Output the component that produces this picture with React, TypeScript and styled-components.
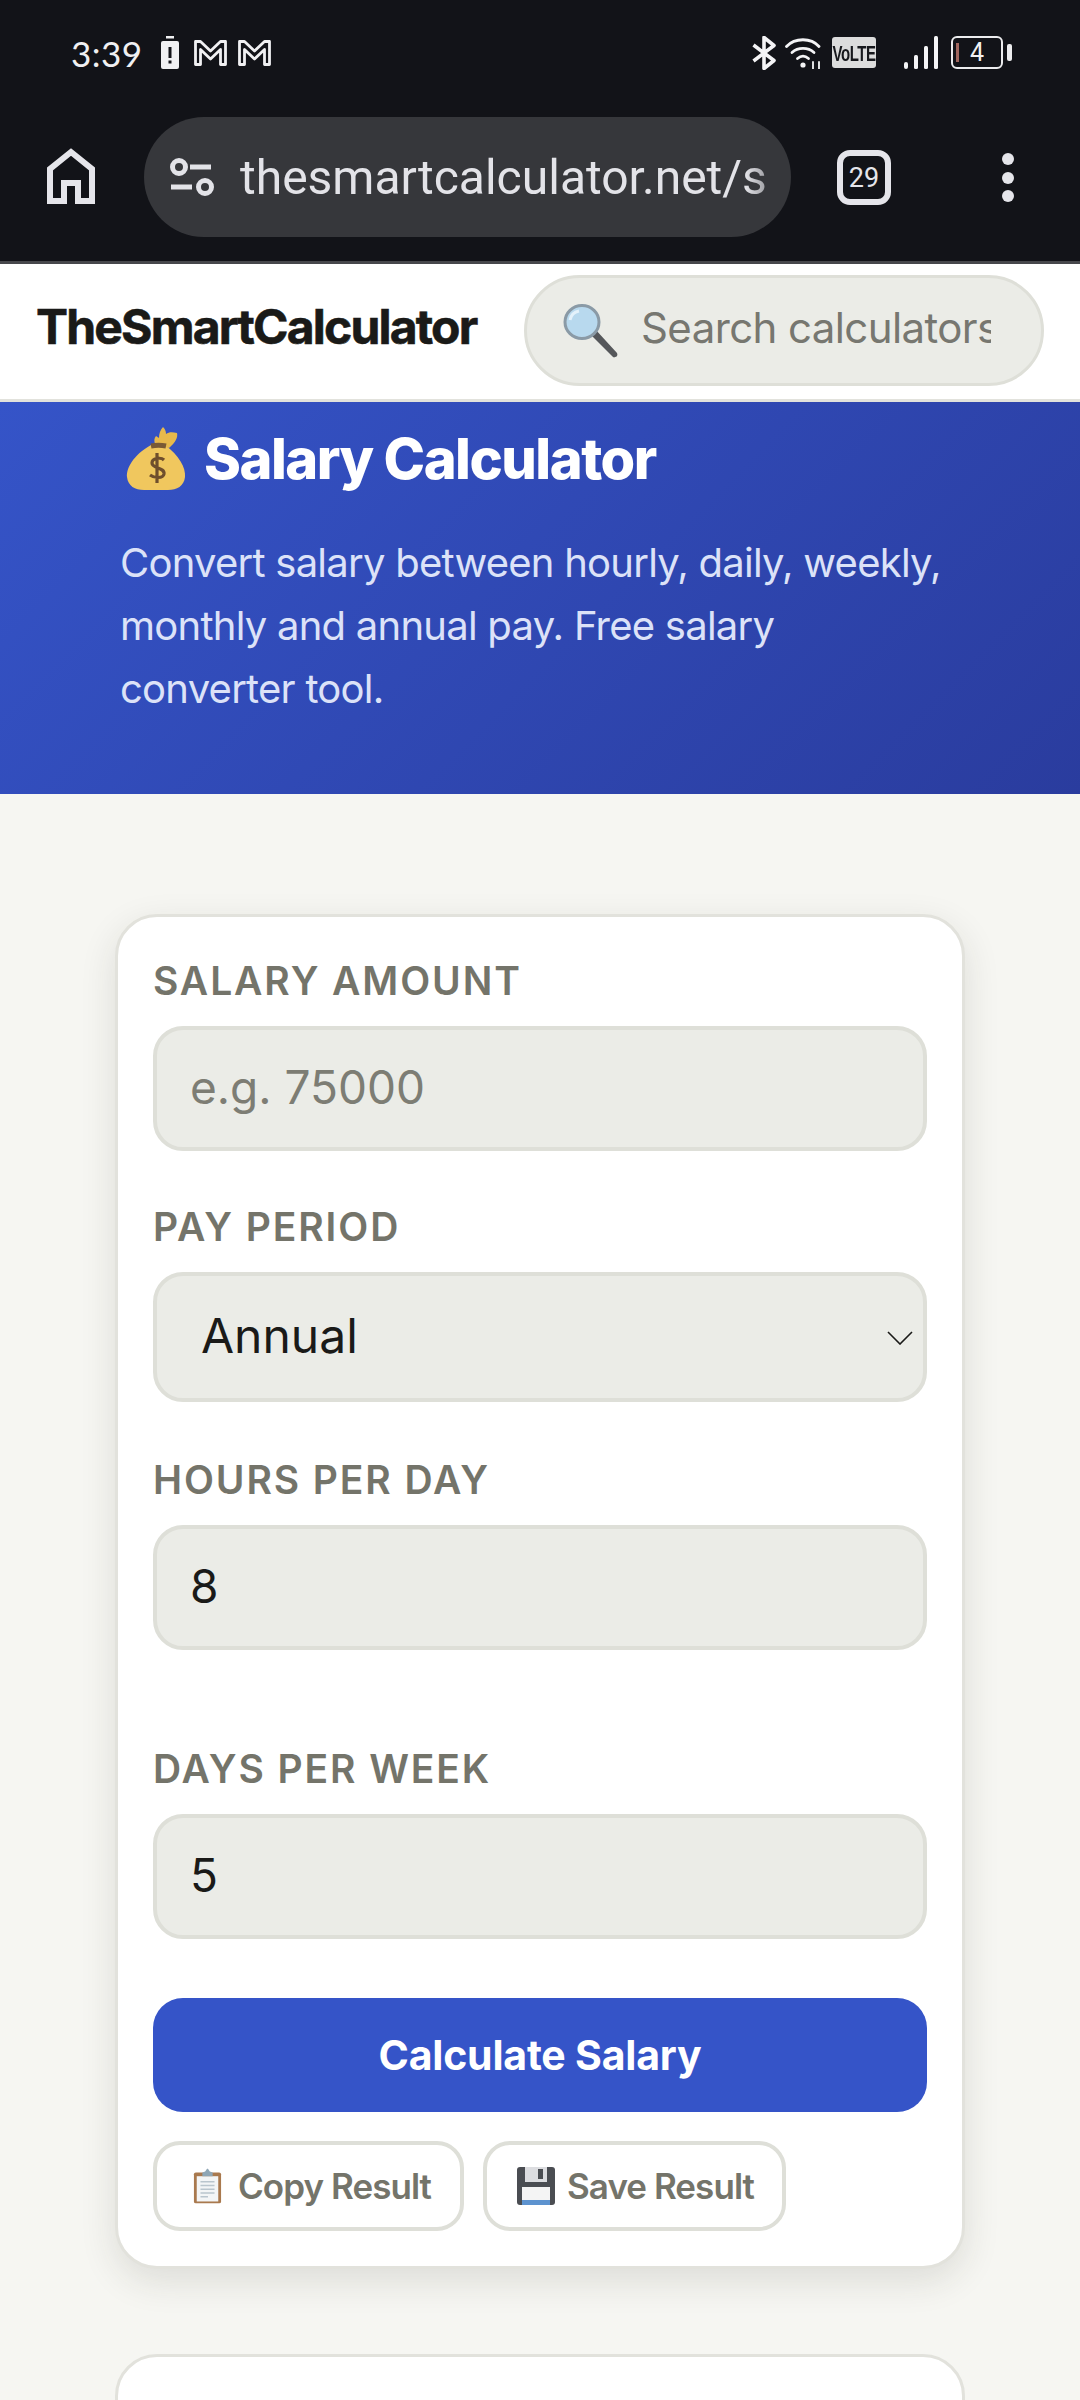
import React from "react";
import styled, { createGlobalStyle } from "styled-components";

const Global = createGlobalStyle`
  html, body { margin: 0; padding: 0; background: #f6f6f2; }
  body { width: 1080px; height: 2400px; overflow: hidden; font-family: Inter, "Liberation Sans", sans-serif; }
  * { box-sizing: border-box; }
`;

const Chrome = styled.div`
  height: 264px; background: #121318; border-bottom: 3px solid #47484c;
  display: flex; flex-direction: column; color: #e5e5ea;
`;
const StatusBar = styled.div`
  height: 105px; padding: 0 77px 0 71px; display: flex; align-items: center; justify-content: space-between;
`;
const StatusGroup = styled.div`
  display: flex; align-items: center; gap: ${(p: { $gap: number }) => p.$gap}px;
`;
const Time = styled.span`
  font-family: Lato, sans-serif; font-size: 35px; letter-spacing: 0.5px; margin-right: 7px; color: #f0f0f2;
`;
const AlertBattery = styled.svg`
  margin-right: 4px;
`;
const VoLTE = styled.span`
  width: 44px; height: 31px; border-radius: 3px; background: #dcdcdc; color: #17181c;
  font-family: "Liberation Sans", sans-serif; font-weight: 700; font-size: 15px; letter-spacing: -0.5px;
  display: flex; align-items: center; justify-content: center;
`;
const VoLTEText = styled.span`
  display: inline-block; transform: scaleY(1.5);
`;
const SignalBars = styled.svg`
  margin-left: 19px;
`;
const Battery = styled.div`
  width: 52px; height: 33px; border: 2.5px solid #ececee; border-radius: 6px;
  display: flex; align-items: center; justify-content: center; position: relative;
  font-family: Roboto, sans-serif; font-size: 25px; color: #f0f0f2;
  margin-left: 4px;
  &::before { content: ""; position: absolute; left: 3px; top: 5px; bottom: 5px; width: 2.5px; background: #a0665e; }
  &::after { content: ""; position: absolute; right: -11px; top: 6px; bottom: 6px; width: 5px; border-radius: 2px; background: #ececee; }
`;
const Toolbar = styled.div`
  flex: 1; display: flex; align-items: flex-start; padding: 12px 0 0 47px;
`;
const HomeButton = styled.div`
  width: 50px; height: 56px; margin-top: 31px; flex: none;
`;
const UrlPill = styled.div`
  width: 647px; height: 120px; margin-left: 47px; border-radius: 60px; background: #36373b;
  display: flex; align-items: center; padding-left: 26px; flex: none;
`;
const UrlText = styled.span`
  margin-left: 26px; width: 532px; overflow: hidden; white-space: nowrap;
  font-family: Roboto, sans-serif; font-size: 48px; letter-spacing: 0; color: #e3e3e8;
  -webkit-mask-image: linear-gradient(90deg, #000 95%, rgba(0, 0, 0, 0.5) 100%);
`;
const TabCount = styled.div`
  width: 54px; height: 55px; margin: 33px 0 0 46px; border: 6px solid #e5e5ea; border-radius: 13px; flex: none;
  display: flex; align-items: center; justify-content: center;
  font-family: Roboto, sans-serif; font-size: 27px; color: #e5e5ea;
`;
const MenuDots = styled.div`
  margin: 36px 0 0 111px; display: flex; flex-direction: column; gap: 6.500px; flex: none;
`;
const Dot = styled.i`
  width: 12px; height: 12px; border-radius: 50%; background: #e5e5ea; display: block;
`;

const SiteHeader = styled.header`
  height: 138px; background: #fff; border-bottom: 3px solid #e2e2dc;
  display: flex; align-items: flex-start; padding: 11px 36px 0;
  justify-content: space-between;
`;
const Logo = styled.div`
  font-size: 48px; font-weight: 700; letter-spacing: -1.82px; color: #1a1a18; margin-top: 22px; white-space: nowrap;
  -webkit-text-stroke: 0.6px #1a1a18;
`;
const SearchBox = styled.div`
  width: 520px; height: 111px; border: 3px solid #dedfd8; border-radius: 56px; background: #ebece7;
  display: flex; align-items: center; padding-left: 36px;
`;
const SearchInput = styled.input`
  width: 350px; margin: -7px 0 0 22px; border: 0; outline: 0; background: transparent; padding: 0;
  font-family: Inter, sans-serif; font-size: 42px; letter-spacing: -0.6px; color: #1a1a18;
  &::placeholder { color: #777770; opacity: 1; }
`;

const Hero = styled.section`
  height: 392px; padding: 20px 120px 0; color: #fff;
  background: linear-gradient(135deg, #3554c8 0%, #2a3c9e 100%);
`;
const HeroTitle = styled.h1`
  margin: 0; display: flex; align-items: center; gap: 17px; padding-left: 5px;
  font-size: 56px; font-weight: 800; letter-spacing: -1.5px; line-height: 74px;
`;
const HeroText = styled.p`
  margin: 35px 0 0; width: 826px; font-size: 40px; line-height: 63px; letter-spacing: -0.75px; color: #dce2f8;
`;

const Main = styled.main`
  padding: 120px 115px 0; display: flex; flex-direction: column; gap: 85px;
`;
const Card = styled.div`
  background: #fff; border: 3px solid #e2e2dc; border-radius: 42px; padding: 42px 35px 35px;
  box-shadow: 0 12px 36px rgba(40, 40, 30, 0.12);
`;
const EmptyCard = styled(Card)`
  height: 300px; box-shadow: none;
`;
const Field = styled.div`
  display: flex; flex-direction: column; margin-bottom: ${(p: { $after: number }) => p.$after}px;
`;
const Label = styled.label`
  font-size: 39px; font-weight: 600; line-height: 44px; letter-spacing: 1.9px; color: #74746a;
  margin-bottom: 23px; text-transform: uppercase;
`;
const TextInput = styled.input`
  width: 100%; height: 125px; border: 4px solid #dedfd8; border-radius: 30px; background: #ebece7;
  padding: 0 33px 4px; outline: 0; font-family: Inter, sans-serif; font-size: 46px; color: #1a1a18;
  &::placeholder { color: #7d7d74; opacity: 1; }
`;
const SelectWrap = styled.div`
  position: relative;
`;
const SelectInput = styled.select`
  display: block; width: 100%; height: 130px; border: 4px solid #dedfd8; border-radius: 30px; background-color: #ebece7;
  appearance: none; padding: 0 44px 4px; outline: 0; font-family: Inter, sans-serif; font-size: 48px; color: #1a1a18;
`;
const Chevron = styled.svg`
  position: absolute; right: 14px; top: 59px; pointer-events: none;
`;
const Primary = styled.button`
  display: block; width: 100%; height: 114px; border: 0; border-radius: 30px; background: #3554c8; color: #fff;
  font-family: Inter, sans-serif; font-size: 41px; font-weight: 700; letter-spacing: -0.2px;
`;
const Actions = styled.div`
  display: flex; gap: 19px; margin-top: 29px;
`;
const Secondary = styled.button`
  height: 90px; border: 4px solid #dedfd8; border-radius: 27px; background: #fff; color: #74746a;
  display: flex; align-items: center; gap: ${(p: { $w: number; $gap: number; $pad: number }) => p.$gap}px; padding: 0 0 0 ${(p) => p.$pad}px;
  width: ${(p) => p.$w}px;
  font-family: Inter, sans-serif; font-size: 35px; font-weight: 600; letter-spacing: -0.95px;
`;

const GmailIcon = () => (
  <svg width="33" height="26" viewBox="0 0 33 26" fill="none" stroke="#f0f0f2" strokeWidth="2.800" strokeLinejoin="round">
    <path d="M1.500 1.500h5l10 9.500 10-9.500h5v23H26.500V9.500L16.500 19 6.500 9.500v15H1.500z" />
  </svg>
);

const App = () => (
  <>
    <Global />
    <Chrome>
      <StatusBar>
        <StatusGroup $gap={11}>
          <Time>3:39</Time>
          <AlertBattery width="18" height="33" viewBox="0 0 18 33">
            <rect x="5" y="0" width="8" height="2.500" fill="#f0f0f2" />
            <path d="M2 5h14a2 2 0 0 1 2 2v24a2 2 0 0 1-2 2H2a2 2 0 0 1-2-2V7a2 2 0 0 1 2-2z" fill="#f0f0f2" />
            <rect x="7.500" y="11" width="3" height="11" fill="#121318" />
            <rect x="7.500" y="24.500" width="3" height="3" fill="#121318" />
          </AlertBattery>
          <GmailIcon />
          <GmailIcon />
        </StatusGroup>
        <StatusGroup $gap={9}>
          <svg width="24" height="34" viewBox="0 0 24 34" fill="none" stroke="#f4f4f6" strokeWidth="3.600" strokeLinejoin="round">
            <path d="M1.500 9 22 24.500 12 32.500V1.500L22 9.500 1.500 25" />
          </svg>
          <svg width="38" height="32" viewBox="0 0 38 32" fill="none" stroke="#f4f4f6" strokeWidth="2.800" strokeLinecap="round">
            <path d="M1.500 9.500C10 .5 26 .5 34 9.500" />
            <path d="M7 15.500c6-5.500 16-5.500 22 0" />
            <path d="M12.500 21.500c3.500-3 7.500-3 11 0" />
            <circle cx="18" cy="28" r="2.600" fill="#f4f4f6" stroke="none" />
            <path d="M28 25v7M34 25v7" strokeWidth="1.800" />
          </svg>
          <VoLTE><VoLTEText>VoLTE</VoLTEText></VoLTE>
          <SignalBars width="34" height="33" viewBox="0 0 34 33" fill="#f4f4f6">
            <rect x="0" y="26" width="4" height="7" rx="2" />
            <rect x="10" y="19" width="4" height="14" rx="1.500" />
            <rect x="20" y="10" width="4" height="23" rx="1.500" />
            <rect x="30" y="0" width="4" height="33" rx="1.500" />
          </SignalBars>
          <Battery>4</Battery>
        </StatusGroup>
      </StatusBar>
      <Toolbar>
        <HomeButton>
          <svg width="48" height="56" viewBox="0 0 48 56" fill="none" stroke="#e5e5ea" strokeWidth="6">
            <path d="M3 53V21L24 4l21 17v32H31V35H17v18z" strokeLinejoin="miter" />
          </svg>
        </HomeButton>
        <UrlPill>
          <svg width="44" height="38" viewBox="0 0 44 38" fill="none" stroke="#e3e3e8" strokeWidth="5">
            <circle cx="9" cy="9" r="6.500" />
            <path d="M20 9h21M1 29h21" />
            <circle cx="35" cy="29" r="6.500" />
          </svg>
          <UrlText>thesmartcalculator.net/s</UrlText>
        </UrlPill>
        <TabCount>29</TabCount>
        <MenuDots>
          <Dot />
          <Dot />
          <Dot />
        </MenuDots>
      </Toolbar>
    </Chrome>

    <SiteHeader>
      <Logo>TheSmartCalculator</Logo>
      <SearchBox>
        <svg width="56" height="54" viewBox="0 0 56 54">
          <path d="M26 29l6-4 22 24c1 2 0 4-2 4-1 1-2 0-3-1z" fill="#55575a" />
          <ellipse cx="19" cy="18" rx="17" ry="16.500" fill="#b8d9ee" stroke="#8a9aa6" strokeWidth="3" />
          <path d="M7 16c1-5 4-8 9-9" stroke="#e4f2fb" strokeWidth="3" fill="none" />
        </svg>
        <SearchInput placeholder="Search calculators" readOnly />
      </SearchBox>
    </SiteHeader>

    <Hero>
      <HeroTitle>
        <svg width="62" height="64" viewBox="0 0 62 64">
          <path d="M26 18C8 28 1 42 2 50c1 9 8 13 17 13h24c9 0 16-4 17-13 1-9-6-22-20-32z" fill="#f0c75e" />
          <path d="M30 17c-1-3-1-6 1-8l3 2c0-4 1-8 4-11 2 2 3 4 3 7 3-2 6-2 11-1 1 4-1 9-8 15z" fill="#e7b94c" />
          <path d="M26 19c5-1 10-1 15 0" stroke="#7a5a35" strokeWidth="5" fill="none" />
          <path d="M39 33c-3-3-12-2-12 3 0 6 13 4 12 11-1 5-10 4-14 1M32 26v30" stroke="#6f4e2c" strokeWidth="3.200" fill="none" />
        </svg>
        Salary Calculator
      </HeroTitle>
      <HeroText>Convert salary between hourly, daily, weekly, monthly and annual pay. Free salary converter tool.</HeroText>
    </Hero>

    <Main>
      <Card>
        <Field $after={54}>
          <Label>Salary Amount</Label>
          <TextInput placeholder="e.g. 75000" readOnly />
        </Field>
        <Field $after={56}>
          <Label>Pay Period</Label>
          <SelectWrap>
            <SelectInput defaultValue="Annual">
              <option>Annual</option>
            </SelectInput>
            <Chevron width="26" height="14" viewBox="0 0 26 14" fill="none" stroke="#1a1a18" strokeWidth="1.600">
              <path d="M1 1l12 12L25 1" />
            </Chevron>
          </SelectWrap>
        </Field>
        <Field $after={97}>
          <Label>Hours Per Day</Label>
          <TextInput defaultValue="8" readOnly />
        </Field>
        <Field $after={59}>
          <Label>Days Per Week</Label>
          <TextInput defaultValue="5" readOnly />
        </Field>
        <Primary>Calculate Salary</Primary>
        <Actions>
          <Secondary $w={311} $gap={16} $pad={36}>
            <svg width="29" height="37" viewBox="0 0 31 38">
              <rect x="1" y="4" width="29" height="33" rx="2" fill="#a9794e" />
              <rect x="4" y="8" width="23" height="27" fill="#f3f5f6" />
              <path d="M8 14h15M8 18h15M8 22h15M8 26h15M8 30h8" stroke="#b9c5cd" strokeWidth="1.500" />
              <path d="M10 4l3-1 2-3h1l2 3 3 1v4H10z" fill="#8ea6b5" />
            </svg>
            Copy Result
          </Secondary>
          <Secondary $w={303} $gap={12} $pad={30}>
            <svg width="38" height="38" viewBox="0 0 38 38">
              <rect x="0" y="0" width="38" height="38" rx="3" fill="#4a4d52" />
              <rect x="8" y="0" width="22" height="15" fill="#dcdde0" />
              <rect x="21" y="2" width="5" height="10" fill="#4a4d52" />
              <rect x="5" y="20" width="28" height="18" fill="#f4f4f4" />
              <rect x="5" y="33" width="28" height="5" fill="#5d93cf" />
            </svg>
            Save Result
          </Secondary>
        </Actions>
      </Card>
      <EmptyCard />
    </Main>
  </>
);

export default App;
